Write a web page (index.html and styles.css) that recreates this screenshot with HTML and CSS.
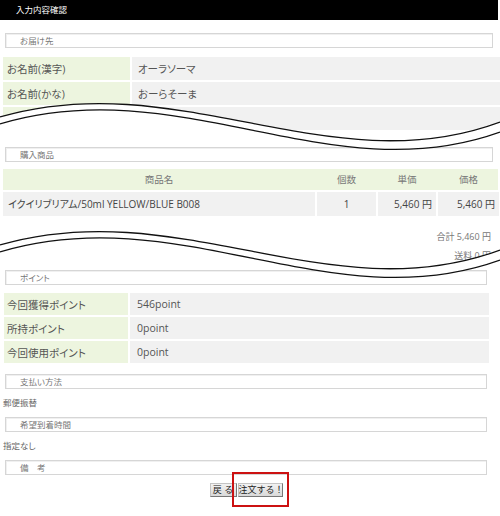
FILE: index.html
```html
<!DOCTYPE html>
<html lang="ja">
<head>
<meta charset="utf-8">
<title>入力内容確認</title>
<link rel="stylesheet" href="styles.css">
</head>
<body>
<div class="page">
  <div class="titlebar">入力内容確認</div>

  <div class="sec sec-wide sec-first">お届け先</div>
  <div class="info info-addr">
    <div class="lab">お名前(漢字)</div><div class="val">オーラソーマ</div>
    <div class="lab">お名前(かな)</div><div class="val">おーらそーま</div>
    <div class="lab"></div><div class="val"></div>
  </div>

  <div class="tear tear-1">
    <svg viewBox="0 0 500 54" width="500" height="54" aria-hidden="true">
      <path class="fill" d="M0,19 C180,-33 330,87 500,24 L500,48 L0,48 Z"/>
      <path class="fill" d="M0,19 C180,-33 330,87 500,24 L500,34 C330,95 180,-28 0,26 Z"/>
      <path class="line" d="M0,19 C180,-33 330,87 500,24"/>
      <path class="line" d="M0,26 C180,-28 330,95 500,34"/>
    </svg>
  </div>

  <div class="sec sec-wide">購入商品</div>
  <div class="items">
    <div class="items-head">
      <span>商品名</span><span>個数</span><span>単価</span><span>価格</span>
    </div>
    <div class="items-row">
      <span class="name">イクイリブリアム/50ml YELLOW/BLUE B008</span>
      <span class="qty">1</span>
      <span class="num">5,460 円</span>
      <span class="num">5,460 円</span>
    </div>
  </div>

  <div class="totals">
    <div>合計 5,460 円</div>
    <div>送料 0 円</div>
  </div>

  <div class="tear tear-2">
    <svg viewBox="0 0 500 54" width="500" height="54" aria-hidden="true">
      <path class="fill" d="M0,19 C180,-33 330,87 500,24 L500,34 C330,95 180,-28 0,26 Z"/>
      <path class="line" d="M0,19 C180,-33 330,87 500,24"/>
      <path class="line" d="M0,26 C180,-28 330,95 500,34"/>
    </svg>
  </div>

  <div class="sec">ポイント</div>
  <div class="info info-points">
    <div class="lab">今回獲得ポイント</div><div class="val">546point</div>
    <div class="lab">所持ポイント</div><div class="val">0point</div>
    <div class="lab">今回使用ポイント</div><div class="val">0point</div>
  </div>

  <div class="sec sec-pay">支払い方法</div>
  <div class="note">郵便振替</div>
  <div class="sec">希望到着時間</div>
  <div class="note">指定なし</div>
  <div class="sec">備　考</div>

  <div class="actions">
    <button type="button" class="btn btn-back">戻 る</button><button type="button" class="btn btn-order">注文する！</button>
    <span class="highlight"></span>
  </div>
</div>
</body>
</html>
```

FILE: styles.css
```css
html, body {
  margin: 0;
  padding: 0;
  background: #fff;
}

body {
  font-family: "Open Sans", "Noto Sans CJK JP", sans-serif;
  font-feature-settings: "palt";
  color: #555;
}

.page {
  width: 498px;
  padding-bottom: 14px;
}

.titlebar {
  height: 20px;
  line-height: 20px;
  background: #000;
  color: #fff;
  font-size: 8.5px;
  padding-left: 16px;
}

.sec {
  height: 13px;
  line-height: 13px;
  margin: 0 11px 0 5px;
  padding-left: 14px;
  border: 1px solid #d6d6d6;
  box-shadow: inset 1px 1px 0 #f0f0f0;
  background: #fff;
  font-size: 8.5px;
  color: #777;
}

.sec-wide {
  margin-right: 5px;
}

.sec-first {
  margin-top: 13px;
}

.sec-pay {
  margin-top: 11px;
}

.info {
  display: grid;
  gap: 2px;
  font-size: 10.5px;
  color: #555;
}

.info-addr {
  margin: 9px 0 0 3px;
  grid-template-columns: 127px 368px;
  grid-auto-rows: 23px;
}

.info-addr .lab { padding-left: 4px; }
.info-addr .val { padding-left: 6px; }

.info-points {
  margin: 8px 0 0 4px;
  grid-template-columns: 124px 359px;
  grid-auto-rows: 22px;
}

.info-points .lab { padding-left: 3px; }
.info-points .val { padding-left: 7px; }

.lab {
  background: #edf5df;
  display: flex;
  align-items: center;
}

.val {
  background: #f1f1f1;
  display: flex;
  align-items: center;
}

.tear {
  position: relative;
  z-index: 1;
}

.tear svg {
  position: absolute;
  left: 0;
  overflow: visible;
}

.tear-1 {
  height: 17px;
}

.tear-1 svg {
  top: -32px;
}

.tear-2 {
  height: 5px;
}

.tear-2 svg {
  top: -39px;
}

.tear .fill {
  fill: #fff;
  stroke: none;
}

.tear .line {
  fill: none;
  stroke: #111;
  stroke-width: 1.3;
}

.items {
  margin: 7px 0 0 3px;
  display: flex;
  flex-direction: column;
  gap: 2px;
}

.items-head,
.items-row {
  display: grid;
  grid-template-columns: 312px 59px 58px 61px;
  column-gap: 2px;
}

.items-head {
  height: 21px;
  line-height: 21px;
  background: #edf5df;
  font-size: 9.5px;
  color: #777;
  text-align: center;
}

.items-row {
  height: 24px;
  line-height: 24px;
  font-size: 10px;
  color: #444;
}

.items-row span {
  background: #f1f1f1;
}

.items-row .name {
  padding-left: 5px;
}

.items-row .qty {
  text-align: center;
}

.items-row .num {
  text-align: right;
  padding-right: 4px;
}

.totals {
  margin-top: 11px;
  padding-right: 7px;
  text-align: right;
  font-size: 9px;
  line-height: 19px;
  color: #777;
}

.note {
  height: 28px;
  line-height: 28px;
  padding-left: 3px;
  font-size: 8.5px;
  color: #666;
}

.actions {
  position: relative;
  margin-top: 8px;
  height: 14px;
  display: flex;
  justify-content: center;
  gap: 1px;
  padding-right: 6px;
}

.btn {
  height: 14px;
  margin: 0;
  padding: 0;
  font-family: "Open Sans", "Noto Sans CJK JP", sans-serif;
  font-size: 9px;
  line-height: 12px;
  color: #222;
  background: linear-gradient(#f2f2f2, #d9d9d9);
  border: 1px solid;
  border-color: #c4c4c4 #777 #777 #c4c4c4;
  border-radius: 0;
  text-align: center;
  white-space: nowrap;
}

.btn-back {
  width: 27px;
}

.btn-order {
  width: 45px;
}

.highlight {
  position: absolute;
  left: 232px;
  top: -11px;
  width: 53px;
  height: 31px;
  border: 2px solid #cc1111;
}
```
